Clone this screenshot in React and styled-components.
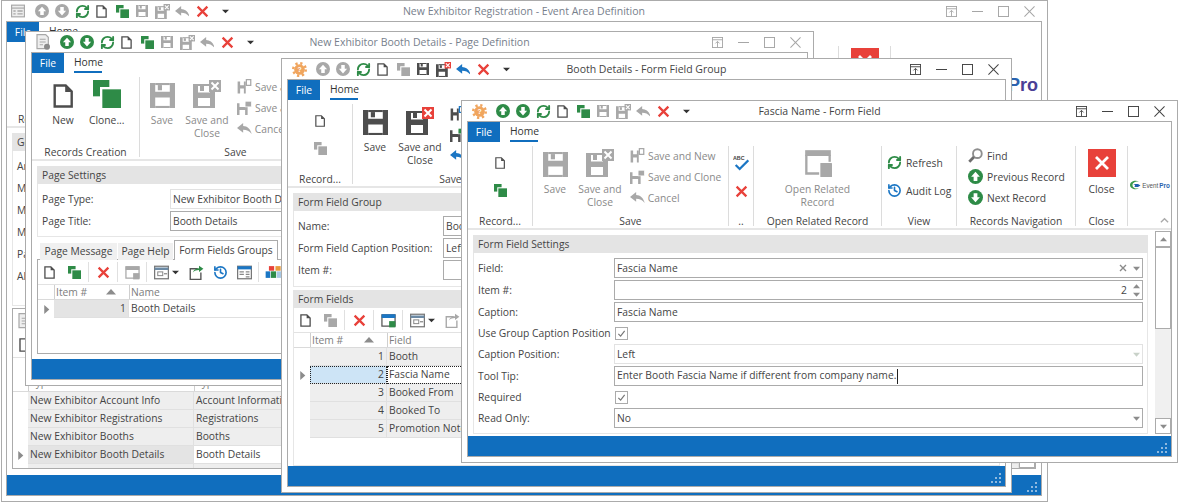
import React from "react";
import styled, { createGlobalStyle } from "styled-components";
import { RefreshCw, History } from "lucide-react";

const Global = createGlobalStyle`
  html, body { margin: 0; padding: 0; background: #fff; }
  body { font-family: "Open Sans", "Noto Sans", sans-serif; font-size: 10.3px; color: #444; }
  * { box-sizing: border-box; }
`;

const GREEN = "#2e8b47", GREY = "#a8a8a8", DARK = "#4d4d4d", RED = "#e8413a", BLUE = "#1b76c4", LINE = "#ababab";

/* ---------- drawings ---------- */
const Svg = ({ s = 16, w, vb = "0 0 24 24", children }) => (
  <svg width={w || s} height={s} viewBox={vb} style={{ display: "block", flex: "none" }}>{children}</svg>
);
const Doc = ({ s, c = DARK }) => (
  <Svg s={s} w={s * 0.85} vb="0 0 20 24">
    <path d="M1.5 1.5H12.5L18.5 7.5V22.5H1.5Z" fill="#fff" stroke={c} strokeWidth="2.4" />
    <path d="M12 1.5V8H18.5Z" fill={c} />
  </Svg>
);
const Clone = ({ s, c = GREEN }) => (
  <Svg s={s}>
    <rect x="0" y="0" width="14" height="14" fill={c} />
    <rect x="6" y="6" width="18" height="18" fill="#fff" />
    <rect x="8" y="8" width="16" height="16" fill={c} />
  </Svg>
);
const floppy = "M0 0H24V24H0Z M5 0V8.5H19V0Z M5 14V24H19V14Z";
const Floppy = ({ s, c = GREY }) => (
  <Svg s={s}>
    <path d={floppy} fill={c} fillRule="evenodd" />
    <rect x="5" y="0" width="14" height="2" fill={c} />
    <rect x="7.5" y="2" width="4" height="5" fill={c} />
    <rect x="5" y="22" width="14" height="2" fill={c} />
  </Svg>
);
const SaveClose = ({ s, c = GREY, box = GREY }) => (
  <Svg s={s} w={s} vb="0 0 28 28">
    <g transform="translate(0 4)">
      <path d="M0 0H22V24H0Z M5 0V8.5H17V0Z M5 14V24H17V14Z" fill={c} fillRule="evenodd" />
      <rect x="5" y="0" width="12" height="2" fill={c} />
      <rect x="7" y="2" width="4" height="5" fill={c} />
      <rect x="5" y="22" width="12" height="2" fill={c} />
    </g>
    <rect x="16" y="0" width="12" height="12" fill={box} />
    <path d="M18.5 2.5L25.5 9.5M25.5 2.5L18.5 9.5" stroke="#fff" strokeWidth="2" />
  </Svg>
);
const SaveNew = ({ c = GREY, a = GREY }) => (
  <Svg s={15}>
    <path d="M1 4H14V23H1Z M5 4V10H11V4Z M5 15V23H11V15Z" fill={c} fillRule="evenodd" />
    <path d="M15 1H22V10H15Z" fill="#fff" stroke={a} strokeWidth="2" />
  </Svg>
);
const SaveCopy = ({ c = GREY, a = GREY }) => (
  <Svg s={15}>
    <path d="M0 5H17V24H0Z M4 5V11H13V5Z M4 16V24H13V16Z" fill={c} fillRule="evenodd" />
    <rect x="13" y="2" width="10" height="9" fill={a} stroke="#fff" strokeWidth="1" />
  </Svg>
);
const Undo = ({ s, c = GREY }) => (
  <Svg s={s} w={s * 1.34} vb="0 0 24 18">
    <path d="M0 8L10 0V5C17 5 22 10 24 18C20 13 16 11 10 11V16Z" fill={c} />
  </Svg>
);
const Cross = ({ s, c = RED }) => (
  <Svg s={s}>
    <path d="M3 3L21 21M21 3L3 21" stroke={c} strokeWidth="4.2" fill="none" />
  </Svg>
);
const Up = ({ s, c = GREEN }) => (
  <Svg s={s}>
    <circle cx="12" cy="12" r="12" fill={c} />
    <path d="M12 4.5L19 12.5H15V19H9V12.5H5Z" fill="#fff" />
  </Svg>
);
const Down = ({ s, c = GREEN }) => (
  <Svg s={s}>
    <circle cx="12" cy="12" r="12" fill={c} />
    <path d="M12 19.5L5 11.5H9V5H15V11.5H19Z" fill="#fff" />
  </Svg>
);
const Refresh = ({ s }) => <RefreshCw size={s} color={GREEN} strokeWidth={3} style={{ flex: "none" }} />;
const Caret = () => (
  <Svg s={7} vb="0 0 8 8"><path d="M0 2H8L4 6Z" fill="#333" /></Svg>
);
const Tri = ({ d = "down", c = "#8c8c8c", s = 7 }) => (
  <Svg s={s} vb="0 0 8 8"><path d={d === "down" ? "M0 2H8L4 6.5Z" : "M0 6H8L4 1.5Z"} fill={c} /></Svg>
);
const Gear = () => (
  <Svg s={15}>
    <circle cx="12" cy="12" r="8.5" fill="#f0a55e" />
    <circle cx="12" cy="12" r="10" fill="none" stroke="#f0a55e" strokeWidth="4" strokeDasharray="3.6 4.25" />
    <text x="12" y="16" fontSize="11" fontWeight="700" textAnchor="middle" fill="#fff" fontFamily="Liberation Sans">?</text>
  </Svg>
);
const FormApp = () => (
  <Svg s={14}>
    <rect x="1" y="2" width="22" height="20" fill="#eee" stroke={GREY} strokeWidth="2" />
    <path d="M1 7H23" stroke={GREY} strokeWidth="2" />
    <path d="M4 12H8M11 12H20M4 17H8M11 17H20" stroke={GREY} strokeWidth="2.4" />
  </Svg>
);
const DocApp = () => (
  <Svg s={16}>
    <path d="M3 1H16L20 5V22H3Z" fill="#eee" stroke={GREY} strokeWidth="1.8" />
    <path d="M7 8H16M7 12H16M7 16H12" stroke={GREY} strokeWidth="1.6" />
    <circle cx="18" cy="19" r="4.5" fill="#8a8a8a" />
  </Svg>
);
const Pin = ({ c }) => (
  <Svg s={11}>
    <rect x="1" y="1" width="22" height="22" fill="none" stroke={c} strokeWidth="2" />
    <path d="M1 6H23" stroke={c} strokeWidth="2" />
    <path d="M12 22V10M7.5 14L12 9.5L16.5 14" stroke={c} strokeWidth="2" fill="none" />
  </Svg>
);
const Min = ({ c }) => <Svg s={11}><path d="M0 12H24" stroke={c} strokeWidth="2.2" /></Svg>;
const Max = ({ c }) => <Svg s={11}><rect x="1" y="1" width="22" height="22" fill="none" stroke={c} strokeWidth="2.2" /></Svg>;
const CloseW = ({ c }) => <Svg s={11}><path d="M1 1L23 23M23 1L1 23" stroke={c} strokeWidth="2.2" /></Svg>;
const Magnifier = () => (
  <Svg s={15}>
    <circle cx="15" cy="9" r="7" fill="#fff" stroke="#8e8e8e" strokeWidth="3" />
    <path d="M9.5 14.5L2 22" stroke="#6e6e6e" strokeWidth="4.5" />
  </Svg>
);
const Spell = () => (
  <Svg s={16}>
    <text x="0" y="8" fontSize="8" fontWeight="700" fill="#444" fontFamily="Liberation Sans">ABC</text>
    <path d="M4 15L10 21L23 8" fill="none" stroke={BLUE} strokeWidth="3.4" />
  </Svg>
);
const Related = ({ s }) => (
  <Svg s={s}>
    <path d="M1 1H23V6H1Z" fill={GREY} />
    <path d="M2 5V21H13" fill="none" stroke={GREY} strokeWidth="2" />
    <path d="M22 5V11" fill="none" stroke={GREY} strokeWidth="2" />
    <rect x="14" y="12" width="10" height="12" rx="0.5" fill={GREY} />
  </Svg>
);
const PanelLayout = ({ a = "#8e8e8e", b = GREY }) => (
  <Svg s={15}>
    <rect x="1.5" y="3" width="21" height="18" fill="#fff" stroke={a === BLUE ? "#555" : GREY} strokeWidth="2" />
    <rect x="1" y="2" width="22" height="6" fill={a === BLUE ? BLUE : GREY} />
    <rect x="13" y="13" width="10" height="10" fill={b} />
  </Svg>
);
const ViewPick = ({ c = "#6c8aa5" }) => (
  <Svg s={15}>
    <rect x="1" y="2" width="22" height="20" fill="#fff" stroke="#777" strokeWidth="2" />
    <path d="M1 6H23" stroke={c} strokeWidth="4" />
    <rect x="6" y="11" width="8" height="6" fill="none" stroke="#888" strokeWidth="1.6" />
    <path d="M16 14H21" stroke="#888" strokeWidth="2" />
  </Svg>
);
const Export = ({ c = "#555", a = GREEN }) => (
  <Svg s={15}>
    <path d="M14 6H2V23H19V12" fill="none" stroke={c} strokeWidth="2.2" />
    <path d="M6 12C8 7 12 5 16 5V1L23 6L16 11V8C12 8 9 9 6 12Z" fill={a} />
  </Svg>
);
const Audit = ({ s }) => <History size={s} color={BLUE} strokeWidth={2.6} style={{ flex: "none" }} />;
const RowsBox = () => (
  <Svg s={15}>
    <rect x="1" y="2" width="22" height="20" fill="#fff" stroke="#777" strokeWidth="2" />
    <rect x="1" y="2" width="22" height="5" fill={BLUE} />
    <path d="M4 11H11M14 11H20M4 15H11M14 15H20M14 19H20" stroke="#888" strokeWidth="2" />
  </Svg>
);
const Blocks = () => (
  <Svg s={16} w={17} vb="0 0 26 24">
    <rect x="1" y="11" width="7" height="10" fill={BLUE} />
    <rect x="9" y="11" width="8" height="10" fill={GREEN} />
    <rect x="6" y="3" width="8" height="7" fill={RED} />
    <rect x="16" y="3" width="8" height="7" fill="#e89a3c" />
    <rect x="18" y="11" width="7" height="10" fill="#a8c8e4" />
  </Svg>
);
const GripDots = () => (
  <Svg s={10} vb="0 0 10 10">
    <g fill="#8fb9df">
      <rect x="8" y="0" width="2" height="2" /><rect x="4" y="4" width="2" height="2" /><rect x="8" y="4" width="2" height="2" />
      <rect x="0" y="8" width="2" height="2" /><rect x="4" y="8" width="2" height="2" /><rect x="8" y="8" width="2" height="2" />
    </g>
  </Svg>
);
const RowArrow = () => (
  <Svg s={9} vb="0 0 8 8"><path d="M2 0L6.5 4L2 8Z" fill="#8c8c8c" /></Svg>
);

/* ---------- window chrome ---------- */
const Desktop = styled.div`
  position: relative;
  width: 1178px;
  height: 502px;
  overflow: hidden;
`;
const WinFrame = styled.section`
  position: absolute;
  left: ${(p) => p.$x}px;
  top: ${(p) => p.$y}px;
  width: ${(p) => p.$w}px;
  height: ${(p) => p.$h}px;
  display: flex;
  flex-direction: column;
  padding: 0 5px 5px ${(p) => p.$left || 5}px;
  background: #fff;
  border: 1px solid ${LINE};
`;
const TitleBar = styled.header`
  flex: none;
  height: 20px;
  margin: 0 -5px;
  display: grid;
  grid-template-columns: 1fr auto 1fr;
  align-items: center;
`;
const Qat = styled.div`
  display: flex;
  align-items: center;
  padding-left: 7px;
`;
const QatSlot = styled.span`
  width: 20px;
  height: 20px;
  display: flex;
  align-items: center;
  justify-content: center;
  margin-left: ${(p) => p.$gap || 0}px;
`;
const TitleText = styled.div`
  white-space: nowrap;
  font-size: 10.5px;
  padding-bottom: 1px;
  color: ${(p) => (p.$dim ? "#77808c" : "#444")};
`;
const WinButtons = styled.div`
  display: flex;
  justify-content: flex-end;
  align-items: center;
  padding-right: 5px;
`;
const WinBtn = styled.span`
  width: 26px;
  display: flex;
  justify-content: center;
`;
const Inner = styled.div`
  flex: 1;
  min-height: 0;
  display: flex;
  flex-direction: column;
  overflow: hidden;
  border: 1px solid ${LINE};
`;
const TabRow = styled.nav`
  flex: none;
  height: 20px;
  display: flex;
`;
const FileTab = styled.div`
  width: 32px;
  background: #106ebe;
  color: #fff;
  display: flex;
  align-items: center;
  justify-content: center;
`;
const HomeTab = styled.div`
  margin-left: 10px;
  width: 28px;
  text-align: center;
  line-height: 18px;
  white-space: nowrap;
  border-bottom: 2px solid #106ebe;
  color: #333;
`;
const Ribbon = styled.div`
  flex: none;
  height: ${(p) => (p.$short ? 86 : 88)}px;
  display: flex;
  overflow: hidden;
  border-bottom: 2px solid #e6e6e6;
`;
const Group = styled.div`
  flex: ${(p) => (p.$w ? `0 0 ${p.$w}px` : 1)};
  min-width: 0;
  margin-top: 4px;
  height: 80px;
  display: flex;
  flex-direction: column;
  border-right: ${(p) => (p.$plain ? "none" : "1px solid #dcdcdc")};
`;
const GroupBody = styled.div`
  flex: none;
  height: ${(p) => (p.$short ? 66 : 68)}px;
  display: flex;
  justify-content: ${(p) => p.$justify || "flex-start"};
  padding-left: ${(p) => p.$pad || 0}px;
`;
const IconStack = styled.div`
  flex: none;
  width: 100%;
  height: 68px;
  display: flex;
  flex-direction: column;
  align-items: center;
  padding-top: ${(p) => p.$top}px;
  gap: ${(p) => p.$gap}px;
`;
const GroupLabel = styled.div`
  height: 14px;
  line-height: 14px;
  text-align: ${(p) => (p.$left ? "left" : "center")};
  padding-left: ${(p) => (p.$left ? 11 : 0)}px;
  white-space: nowrap;
`;
const LargeBtn = styled.div`
  flex: ${(p) => (p.$w ? `0 0 ${p.$w}px` : 1)};
  display: flex;
  flex-direction: column;
  align-items: center;
  padding-top: ${(p) => (p.$flush ? 2 : 5)}px;
  color: ${(p) => (p.$dim ? "#8a8a8a" : "#444")};
`;
const LargeIcon = styled.div`
  height: 26px;
  display: flex;
  align-items: flex-end;
  margin-bottom: ${(p) => p.$mb || 6}px;
`;
const LargeText = styled.div`
  line-height: 13px;
  text-align: center;
  white-space: nowrap;
`;
const SmallCol = styled.div`
  display: flex;
  flex-direction: column;
  padding-left: ${(p) => p.$pad || 0}px;
  gap: ${(p) => p.$gap || 0}px;
  padding-top: ${(p) => p.$top || 0}px;
  margin-top: -1px;
`;
const SmallBtn = styled.div`
  height: 21px;
  display: flex;
  align-items: center;
  gap: ${(p) => p.$gap || 4}px;
  white-space: nowrap;
  color: ${(p) => (p.$dim ? "#8a8a8a" : "#444")};
`;
const RedSquare = styled.div`
  width: 28px;
  height: 28px;
  background: ${RED};
  display: flex;
  align-items: center;
  justify-content: center;
`;
const StatusBar = styled.footer`
  flex: none;
  height: 20px;
  background: #106ebe;
  display: flex;
  align-items: center;
  justify-content: flex-end;
  padding: 3px 4px 0 0;
`;

/* ---------- forms ---------- */
const Body = styled.div`
  flex: 1;
  min-height: 0;
  display: flex;
  flex-direction: ${(p) => (p.$row ? "row" : "column")};
  gap: ${(p) => p.$gap || 0}px;
  padding: ${(p) => p.$pad || "5px 5px 0"};
  overflow: hidden;
`;
const Section = styled.div`
  flex: ${(p) => (p.$h ? `0 0 ${p.$h}px` : 1)};
  min-width: 0;
  display: flex;
  flex-direction: column;
  border: 1px solid #e6e6e6;
  border-top: none;
`;
const SectionHead = styled.div`
  flex: none;
  height: 18px;
  line-height: 18px;
  padding-left: 5px;
  margin: 0 -1px;
  background: #e4e4e4;
  color: #444;
`;
const FormGrid = styled.div`
  display: grid;
  grid-template-columns: ${(p) => p.$label}px 1fr;
  row-gap: 2px;
  padding: 5px 4px 0 4px;
  align-items: center;
`;
const Label = styled.div`
  white-space: nowrap;
  line-height: 16px;
`;
const Field = styled.div`
  height: 20px;
  display: flex;
  align-items: center;
  padding: 0 2px;
  gap: 6px;
  white-space: nowrap;
  overflow: hidden;
  border: 1px solid ${(p) => (p.$off ? "#e2e2e2" : LINE)};
  color: #444;
`;
const FieldText = styled.span`
  flex: 1;
  min-width: 0;
  text-align: ${(p) => (p.$right ? "right" : "left")};
`;
const CaretLine = styled.i`
  display: inline-block;
  width: 1px;
  height: 15px;
  margin-left: 1px;
  vertical-align: middle;
  background: #222;
`;
const Spin = styled.span`
  display: flex;
  flex-direction: column;
  gap: 1px;
`;
const CheckBox = styled.div`
  width: 13px;
  height: 13px;
  margin-left: 1px;
  border: 1px solid ${LINE};
  display: flex;
  align-items: center;
  justify-content: center;
`;
const CheckCell = styled.div`
  height: 18px;
  display: flex;
  align-items: center;
`;
const Tick = () => (
  <Svg s={9} vb="0 0 10 10"><path d="M1.5 5.5L4 8L8.5 2" fill="none" stroke="#777" strokeWidth="1.3" /></Svg>
);
const ScrollTrack = styled.div`
  flex: 0 0 16px;
  display: flex;
  flex-direction: column;
  background: #f0f0f0;
  margin-top: ${(p) => p.$up || 0}px;
`;
const ScrollBtn = styled.div`
  flex: none;
  height: 16px;
  border: 1px solid ${LINE};
  background: #fff;
  display: flex;
  align-items: center;
  justify-content: center;
`;
const ScrollThumb = styled.div`
  flex: none;
  height: 82px;
  border: 1px solid ${LINE};
  background: #fff;
`;
const ScrollRest = styled.div`
  flex: 1;
`;

/* ---------- grids and tabs ---------- */
const Toolbar = styled.div`
  flex: none;
  height: ${(p) => p.$h || 24}px;
  display: flex;
  align-items: center;
  border-bottom: 1px solid ${(p) => (p.$line ? "#e2e2e2" : "transparent")};
`;
const ToolBtn = styled.span`
  width: 24px;
  display: flex;
  align-items: center;
  justify-content: center;
`;
const ToolPick = styled.span`
  width: 35px;
  display: flex;
  align-items: center;
  gap: 3px;
  padding-left: 5px;
`;
const ToolSep = styled.span`
  width: 1px;
  height: 20px;
  background: #e0e0e0;
  margin: 0 2px;
`;
const GridHead = styled.div`
  flex: none;
  height: ${(p) => p.$h || 15}px;
  display: grid;
  grid-template-columns: ${(p) => p.$cols};
  align-items: center;
  color: #7d7d7d;
  border-bottom: 1px solid #dadada;
`;
const HeadCell = styled.div`
  height: 100%;
  display: flex;
  align-items: ${(p) => (p.$low ? "flex-end" : "center")};
  justify-content: space-between;
  padding: 0 13px ${(p) => (p.$low ? 2 : 0)}px 1px;
  border-left: 1px solid #cfcfcf;
  white-space: nowrap;
`;
const HeadGap = styled.div``;
const GridRow = styled.div`
  flex: none;
  height: 18px;
  display: grid;
  grid-template-columns: ${(p) => p.$cols};
`;
const RowMark = styled.div`
  display: flex;
  align-items: center;
  justify-content: center;
`;
const Cell = styled.div`
  display: flex;
  align-items: center;
  justify-content: ${(p) => (p.$right ? "flex-end" : "flex-start")};
  padding: 0 2px 1px;
  white-space: nowrap;
  overflow: hidden;
  color: #444;
  background: ${(p) => p.$bg || "#eee"};
  border-right: 1px solid #e0e0e0;
  border-bottom: 1px solid #e0e0e0;
  ${(p) => (p.$focus ? "outline: 1px dotted #222; outline-offset: -1px;" : "")}
`;
const TabStrip = styled.div`
  flex: none;
  height: 20px;
  margin-top: 3px;
  margin-bottom: -1px;
  display: flex;
  align-items: flex-end;
  padding-left: 3px;
  gap: 1px;
  position: relative;
  z-index: 1;
`;
const PageTab = styled.div`
  flex: 0 0 ${(p) => p.$w}px;
  text-align: center;
  height: ${(p) => (p.$on ? 20 : 17)}px;
  line-height: ${(p) => (p.$on ? 18 : 16)}px;
  white-space: nowrap;
  background: ${(p) => (p.$on ? "#fff" : "#f0f0f0")};
  border: ${(p) => (p.$on ? `1px solid ${LINE}` : "none")};
  border-bottom: none;
`;
const TabPanel = styled.div`
  flex: 0 0 95px;
  display: flex;
  flex-direction: column;
  border: 1px solid ${LINE};
`;
const GridBox = styled.div`
  flex: 1;
  min-height: 0;
  display: flex;
  overflow: hidden;
  border: 1px solid ${LINE};
  margin-bottom: 6px;
`;
const GridMain = styled.div`
  flex: 1;
  min-width: 0;
  display: flex;
  flex-direction: column;
  overflow: hidden;
`;
const ProLogo = styled.div`
  font: 700 18px "Liberation Sans", Arial, sans-serif;
  color: #2a62ae;
  white-space: nowrap;
  align-self: center;
  padding: 12px 3px 0 0;
`;
const ProTail = styled.span`
  color: #4b3f96;
`;
const MiniLogo = styled.div`
  display: flex;
  align-items: center;
  gap: 1px;
  align-self: center;
  padding-top: 12px;
  font: 6.3px "Liberation Sans", Arial, sans-serif;
  color: #555;
  white-space: nowrap;
`;
const MiniPro = styled.b`
  color: #2a62ae;
`;
const GroupChevron = styled.div`
  position: absolute;
  right: 2px;
  bottom: 1px;
`;
const LogoGroup = styled(Group)`
  position: relative;
`;
const Swoosh = () => (
  <Svg s={10} w={12} vb="0 0 24 20">
    <path d="M20 3C12 -1 2 3 2 10C2 17 12 21 20 17C14 18 7 16 7 10C7 5 14 2 20 3Z" fill="#3a9a4c" />
    <path d="M8 8H18L23 11L18 14H10C13 13 13 9 8 8Z" fill="#1f5fae" />
  </Svg>
);

/* ---------- composed parts ---------- */
const TitleRow = ({ app, up, clone, save, saveBox, undo, title, dim }) => {
  const c = dim ? "#a6a6a6" : "#444";
  return (
    <TitleBar>
      <Qat>
        <QatSlot>{app}</QatSlot>
        <QatSlot $gap={4}><Up s={14} c={up} /></QatSlot>
        <QatSlot><Down s={14} c={up} /></QatSlot>
        <QatSlot><Refresh s={15} /></QatSlot>
        <QatSlot><Doc s={13} /></QatSlot>
        <QatSlot><Clone s={13} c={clone} /></QatSlot>
        <QatSlot><Floppy s={12} c={save} /></QatSlot>
        <QatSlot><SaveClose s={15} c={save} box={saveBox} /></QatSlot>
        <QatSlot><Undo s={11} c={undo} /></QatSlot>
        <QatSlot><Cross s={13} /></QatSlot>
        <QatSlot $gap={3}><Caret /></QatSlot>
      </Qat>
      <TitleText $dim={dim}>{title}</TitleText>
      <WinButtons>
        <WinBtn><Pin c={c} /></WinBtn>
        <WinBtn><Min c={c} /></WinBtn>
        <WinBtn><Max c={c} /></WinBtn>
        <WinBtn><CloseW c={c} /></WinBtn>
      </WinButtons>
    </TitleBar>
  );
};

const Tabs = () => (
  <TabRow>
    <FileTab>File</FileTab>
    <HomeTab>Home</HomeTab>
  </TabRow>
);

const SaveGroup = ({ w = 196, active }) => (
  <Group $w={w}>
    <GroupBody>
      <LargeBtn $w={44} $dim={!active}>
        <LargeIcon><Floppy s={25} c={active ? DARK : GREY} /></LargeIcon>
        <LargeText>Save</LargeText>
      </LargeBtn>
      <LargeBtn $w={46} $dim={!active}>
        <LargeIcon><SaveClose s={28} c={active ? DARK : GREY} box={active ? RED : GREY} /></LargeIcon>
        <LargeText>Save and<br />Close</LargeText>
      </LargeBtn>
      <SmallCol $pad={7}>
        <SmallBtn $gap={3} $dim={!active}><SaveNew c={active ? DARK : GREY} a={active ? BLUE : GREY} />Save and New</SmallBtn>
        <SmallBtn $gap={3} $dim={!active}><SaveCopy c={active ? DARK : GREY} a={active ? GREEN : GREY} />Save and Clone</SmallBtn>
        <SmallBtn $gap={3} $dim={!active}><Undo s={11} c={active ? BLUE : GREY} />Cancel</SmallBtn>
      </SmallCol>
    </GroupBody>
    <GroupLabel>Save</GroupLabel>
  </Group>
);

const RecordGroup = ({ c }) => (
  <Group $w={65}>
    <IconStack $top={11} $gap={15}>
      <Doc s={12} />
      <Clone s={13} c={c} />
    </IconStack>
    <GroupLabel>Record...</GroupLabel>
  </Group>
);

const Status = () => (
  <StatusBar><GripDots /></StatusBar>
);

const WindowOne = () => (
  <WinFrame $x={1} $y={0} $w={1047} $h={502} $left={4}>
    <TitleRow app={<FormApp />} up={GREY} clone={GREEN} save={GREY} saveBox={GREY} undo={GREY} dim title="New Exhibitor Registration - Event Area Definition" />
    <Inner>
      <Tabs />
      <Ribbon $short>
        <Group>
          <GroupBody $short />
          <GroupLabel $left>Records Creation</GroupLabel>
        </Group>
        <Group $w={52}>
          <GroupBody $short>
            <LargeBtn $flush>
              <RedSquare><Cross s={16} c="#fff" /></RedSquare>
            </LargeBtn>
          </GroupBody>
        </Group>
        <Group $w={150} $plain>
          <GroupBody $short $justify="flex-end">
            <ProLogo>P<ProTail>ro</ProTail></ProLogo>
          </GroupBody>
        </Group>
      </Ribbon>
      <Body $gap={2}>
        <Section $h={173}>
          <SectionHead>General</SectionHead>
          <FormGrid $label={130}>
            {["Area:", "Min Qty:", "Max Qty:", "Multiple:", "Parent:", "All:"].map((t) => (
              <React.Fragment key={t}>
                <Label>{t}</Label>
                <Field $off />
              </React.Fragment>
            ))}
          </FormGrid>
        </Section>
        <GridBox>
          <GridMain>
            <Toolbar $h={24}>
              <ToolBtn><DocApp /></ToolBtn>
            </Toolbar>
            <Toolbar $h={25} $line>
              <ToolBtn><Doc s={14} /></ToolBtn>
            </Toolbar>
            <GridHead $h={34} $cols="15px 166px 1fr">
              <HeadGap />
              <HeadCell $low>Type</HeadCell>
              <HeadCell $low>Type</HeadCell>
            </GridHead>
            {[
              ["New Exhibitor Account Info", "Account Information"],
              ["New Exhibitor Registrations", "Registrations"],
              ["New Exhibitor Booths", "Booths"],
              ["New Exhibitor Booth Details", "Booth Details", true],
              ["New Exhibitor Requirements", "Requirements"],
            ].map(([a, b, on]) => (
              <GridRow key={a} $cols="15px 166px 1fr">
                <RowMark>{on && <RowArrow />}</RowMark>
                <Cell $bg={on ? "#e4e4e4" : "#eee"}>{a}</Cell>
                <Cell $bg={on ? "#fff" : "#eee"}>{b}</Cell>
              </GridRow>
            ))}
          </GridMain>
          <ScrollTrack>
            <ScrollRest />
            <ScrollBtn><Tri /></ScrollBtn>
          </ScrollTrack>
        </GridBox>
      </Body>
      <Status />
    </Inner>
  </WinFrame>
);

const WindowTwo = () => (
  <WinFrame $x={25} $y={31} $w={789} $h={355}>
    <TitleRow app={<DocApp />} up={GREEN} clone={GREEN} save={GREY} saveBox={GREY} undo={GREY} dim title="New Exhibitor Booth Details - Page Definition" />
    <Inner>
      <Tabs />
      <Ribbon>
        <Group $w={108}>
          <GroupBody $pad={5}>
            <LargeBtn $w={52}>
              <LargeIcon $mb={6}><Doc s={24} /></LargeIcon>
              <LargeText>New</LargeText>
            </LargeBtn>
            <LargeBtn $w={34}>
              <LargeIcon><Clone s={28} /></LargeIcon>
              <LargeText>Clone...</LargeText>
            </LargeBtn>
          </GroupBody>
          <GroupLabel>Records Creation</GroupLabel>
        </Group>
        <SaveGroup w={192} />
      </Ribbon>
      <Body>
        <Section $h={71}>
          <SectionHead>Page Settings</SectionHead>
          <FormGrid $label={128}>
            <Label>Page Type:</Label>
            <Field $off>New Exhibitor Booth Details</Field>
            <Label>Page Title:</Label>
            <Field>Booth Details</Field>
          </FormGrid>
        </Section>
        <TabStrip>
          <PageTab $w={77}>Page Message</PageTab>
          <PageTab $w={55}>Page Help</PageTab>
          <PageTab $w={104} $on>Form Fields Groups</PageTab>
        </TabStrip>
        <TabPanel>
          <Toolbar $h={25} $line>
            <ToolBtn><Doc s={13} /></ToolBtn>
            <ToolBtn><Clone s={13} /></ToolBtn>
            <ToolSep />
            <ToolBtn><Cross s={13} /></ToolBtn>
            <ToolSep />
            <ToolBtn><PanelLayout /></ToolBtn>
            <ToolSep />
            <ToolPick><ViewPick /><Caret /></ToolPick>
            <ToolBtn><Export /></ToolBtn>
            <ToolBtn><Audit s={15} /></ToolBtn>
            <ToolBtn><RowsBox /></ToolBtn>
            <ToolSep />
            <ToolBtn><Blocks /></ToolBtn>
          </Toolbar>
          <GridHead $cols="16px 75px 1fr">
            <HeadGap />
            <HeadCell>Item #<Tri d="up" s={10} /></HeadCell>
            <HeadCell>Name</HeadCell>
          </GridHead>
          <GridRow $cols="16px 75px 1fr">
            <RowMark><RowArrow /></RowMark>
            <Cell $right $bg="#e4e4e4">1</Cell>
            <Cell $bg="#fff">Booth Details</Cell>
          </GridRow>
        </TabPanel>
      </Body>
      <Status />
    </Inner>
  </WinFrame>
);

const fieldRows = ["Booth", "Fascia Name", "Booked From", "Booked To", "Promotion Notes"];

const WindowThree = () => (
  <WinFrame $x={281} $y={58} $w={731} $h={435}>
    <TitleRow app={<Gear />} up={GREY} clone={GREY} save={DARK} saveBox={RED} undo={BLUE} title="Booth Details - Form Field Group" />
    <Inner>
      <Tabs />
      <Ribbon>
        <RecordGroup c={GREY} />
        <SaveGroup active />
      </Ribbon>
      <Body $gap={3}>
        <Section $h={94}>
          <SectionHead>Form Field Group</SectionHead>
          <FormGrid $label={145}>
            <Label>Name:</Label>
            <Field>Booth Details</Field>
            <Label>Form Field Caption Position:</Label>
            <Field>Left</Field>
            <Label>Item #:</Label>
            <Field />
          </FormGrid>
        </Section>
        <Section>
          <SectionHead>Form Fields</SectionHead>
          <Toolbar $h={25} $line>
            <ToolBtn><Doc s={13} /></ToolBtn>
            <ToolBtn><Clone s={13} c={GREY} /></ToolBtn>
            <ToolSep />
            <ToolBtn><Cross s={13} /></ToolBtn>
            <ToolSep />
            <ToolBtn><PanelLayout a={BLUE} b={GREEN} /></ToolBtn>
            <ToolSep />
            <ToolPick><ViewPick /><Caret /></ToolPick>
            <ToolBtn><Export c={GREY} a={GREY} /></ToolBtn>
          </Toolbar>
          <GridHead $cols="16px 77px 1fr">
            <HeadGap />
            <HeadCell>Item #<Tri d="up" s={10} /></HeadCell>
            <HeadCell>Field</HeadCell>
          </GridHead>
          {fieldRows.map((t, i) => (
            <GridRow key={t} $cols="16px 77px 1fr">
              <RowMark>{i === 1 && <RowArrow />}</RowMark>
              <Cell $right $focus={i === 1} $bg={i === 1 ? "#cde4f6" : "#eee"}>{i + 1}</Cell>
              <Cell $focus={i === 1} $bg={i === 1 ? "#fff" : "#eee"}>{t}</Cell>
            </GridRow>
          ))}
        </Section>
      </Body>
      <Status />
    </Inner>
  </WinFrame>
);

const WindowFour = () => (
  <WinFrame $x={461} $y={100} $w={717} $h={363}>
    <TitleRow app={<Gear />} up={GREEN} clone={GREEN} save={GREY} saveBox={GREY} undo={GREY} title="Fascia Name - Form Field" />
    <Inner>
      <Tabs />
      <Ribbon>
        <RecordGroup c={GREEN} />
        <SaveGroup />
        <Group $w={25}>
          <IconStack $top={9} $gap={14}>
            <Spell />
            <Cross s={13} />
          </IconStack>
          <GroupLabel>..</GroupLabel>
        </Group>
        <Group $w={128}>
          <GroupBody>
            <LargeBtn $dim>
              <LargeIcon><Related s={28} /></LargeIcon>
              <LargeText>Open Related<br />Record</LargeText>
            </LargeBtn>
          </GroupBody>
          <GroupLabel>Open Related Record</GroupLabel>
        </Group>
        <Group $w={75}>
          <GroupBody>
            <SmallCol $pad={5} $gap={7} $top={7}>
              <SmallBtn><Refresh s={15} />Refresh</SmallBtn>
              <SmallBtn><Audit s={15} />Audit Log</SmallBtn>
            </SmallCol>
          </GroupBody>
          <GroupLabel>View</GroupLabel>
        </Group>
        <Group $w={119}>
          <GroupBody>
            <SmallCol $pad={11}>
              <SmallBtn><Magnifier />Find</SmallBtn>
              <SmallBtn><Up s={15} />Previous Record</SmallBtn>
              <SmallBtn><Down s={15} />Next Record</SmallBtn>
            </SmallCol>
          </GroupBody>
          <GroupLabel>Records Navigation</GroupLabel>
        </Group>
        <Group $w={52}>
          <GroupBody>
            <LargeBtn>
              <LargeIcon><RedSquare><Cross s={16} c="#fff" /></RedSquare></LargeIcon>
              <LargeText>Close</LargeText>
            </LargeBtn>
          </GroupBody>
          <GroupLabel>Close</GroupLabel>
        </Group>
        <LogoGroup $plain>
          <GroupBody $short $justify="center">
            <MiniLogo><Swoosh />Event<MiniPro>Pro</MiniPro></MiniLogo>
          </GroupBody>
          <GroupChevron>
            <Svg s={9} vb="0 0 10 10"><path d="M1 7L5 3L9 7" fill="none" stroke="#aaa" strokeWidth="1.5" /></Svg>
          </GroupChevron>
        </LogoGroup>
      </Ribbon>
      <Body $row $gap={7} $pad="5px 0 2px 5px">
        <Section>
          <SectionHead>Form Field Settings</SectionHead>
          <FormGrid $label={136}>
            <Label>Field:</Label>
            <Field>
              <FieldText>Fascia Name</FieldText>
              <Cross s={8} c="#8a8a8a" />
              <Tri />
            </Field>
            <Label>Item #:</Label>
            <Field>
              <FieldText $right>2</FieldText>
              <Spin><Tri d="up" /><Tri /></Spin>
            </Field>
            <Label>Caption:</Label>
            <Field>Fascia Name</Field>
            <Label>Use Group Caption Position</Label>
            <CheckCell><CheckBox><Tick /></CheckBox></CheckCell>
            <Label>Caption Position:</Label>
            <Field $off>
              <FieldText>Left</FieldText>
              <Tri c="#c9d2c9" />
            </Field>
            <Label>Tool Tip:</Label>
            <Field><FieldText>Enter Booth Fascia Name if different from company name.<CaretLine /></FieldText></Field>
            <Label>Required</Label>
            <CheckCell><CheckBox><Tick /></CheckBox></CheckCell>
            <Label>Read Only:</Label>
            <Field>
              <FieldText>No</FieldText>
              <Tri />
            </Field>
          </FormGrid>
        </Section>
        <ScrollTrack $up={-4}>
          <ScrollBtn><Tri d="up" /></ScrollBtn>
          <ScrollThumb />
          <ScrollRest />
          <ScrollBtn><Tri /></ScrollBtn>
        </ScrollTrack>
      </Body>
      <Status />
    </Inner>
  </WinFrame>
);

export default function App() {
  return (
    <Desktop>
      <Global />
      <WindowOne />
      <WindowTwo />
      <WindowThree />
      <WindowFour />
    </Desktop>
  );
}
